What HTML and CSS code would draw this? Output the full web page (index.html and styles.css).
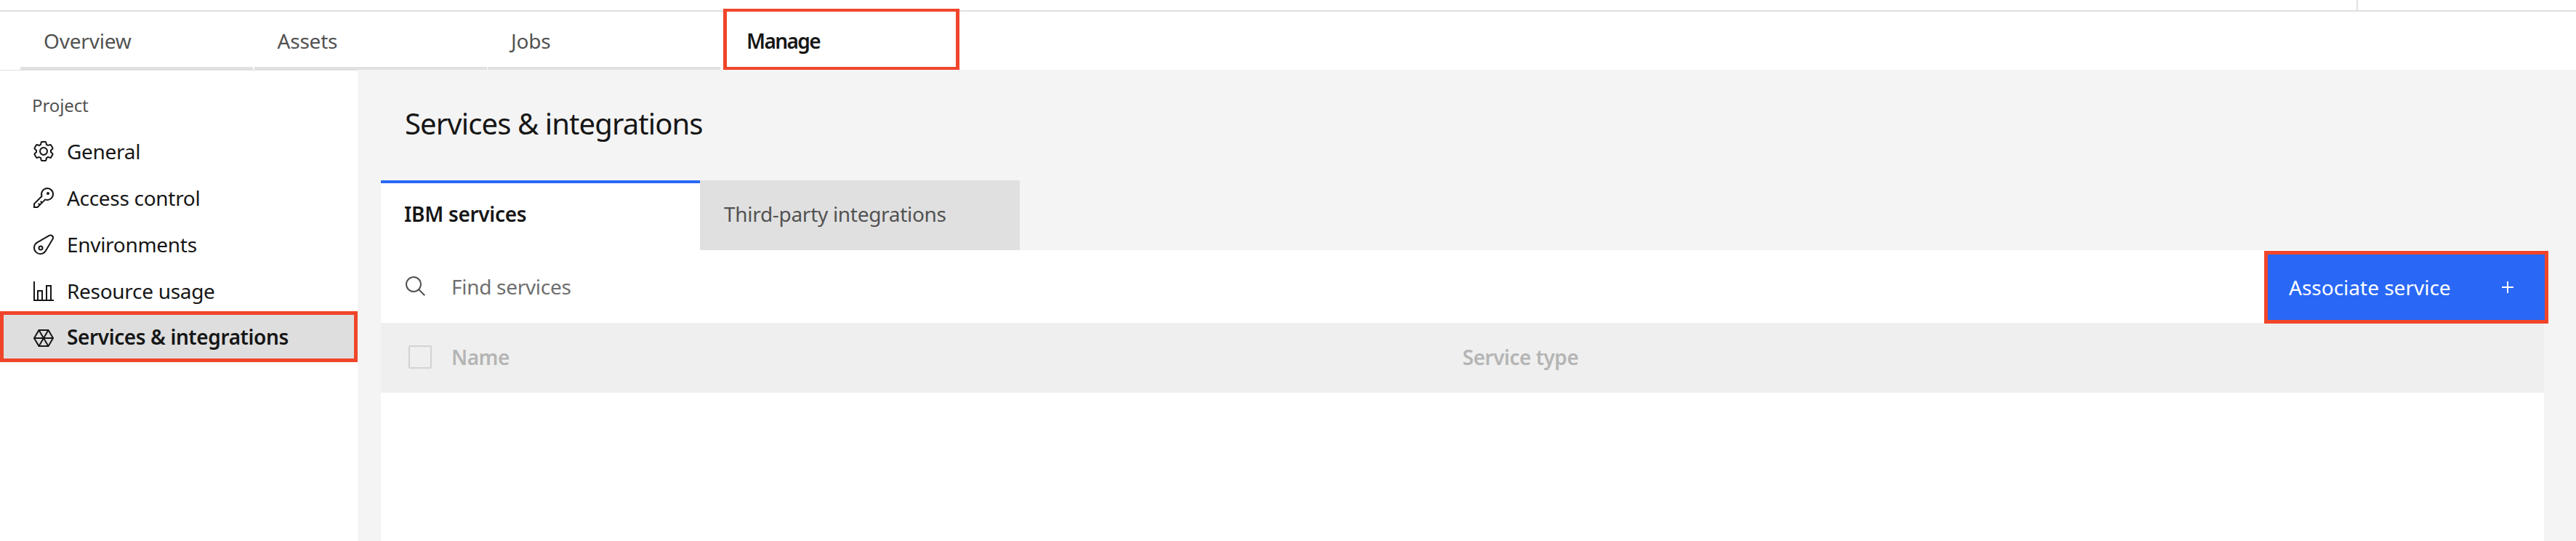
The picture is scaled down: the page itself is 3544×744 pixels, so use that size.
FILE: index.html
```html
<!DOCTYPE html>
<html lang="en">
<head>
  <meta charset="UTF-8" />
  <meta name="viewport" content="width=device-width, initial-scale=1.0" />
  <title>Services &amp; integrations</title>
  <link rel="stylesheet" href="styles.css">
</head>
<body>
  <div class="topbar"><span class="topbar-divider"></span></div>

  <nav class="tabs">
    <a class="tab">Overview</a>
    <a class="tab">Assets</a>
    <a class="tab">Jobs</a>
    <a class="tab tab-active">Manage</a>
  </nav>

  <div class="page">
    <aside class="sidebar">
      <div class="side-label">Project</div>
      <a class="side-item">
        <svg class="icon" viewBox="0 0 32 32"><path d="M27,16.76c0-.25,0-.5,0-.76s0-.51,0-.77l1.92-1.68A2,2,0,0,0,29.3,11L26.94,7a2,2,0,0,0-1.73-1,2,2,0,0,0-.64.1l-2.43.82a11.35,11.35,0,0,0-1.31-.75l-.51-2.52a2,2,0,0,0-2-1.61H13.64a2,2,0,0,0-2,1.61l-.51,2.52a11.48,11.48,0,0,0-1.32.75L7.43,6.06A2,2,0,0,0,6.79,6,2,2,0,0,0,5.06,7L2.7,11a2,2,0,0,0,.41,2.51L5,15.24c0,.25,0,.5,0,.76s0,.51,0,.77L3.11,18.45A2,2,0,0,0,2.7,21L5.06,25a2,2,0,0,0,1.73,1,2,2,0,0,0,.64-.1l2.43-.82a11.35,11.35,0,0,0,1.31.75l.51,2.52a2,2,0,0,0,2,1.61h4.72a2,2,0,0,0,2-1.61l.51-2.52a11.48,11.48,0,0,0,1.32-.75l2.42.82a2,2,0,0,0,.64.1,2,2,0,0,0,1.73-1L29.3,21a2,2,0,0,0-.41-2.51ZM25.21,24l-3.43-1.16a8.86,8.86,0,0,1-2.71,1.57L18.36,28H13.64l-.71-3.55a9.36,9.36,0,0,1-2.7-1.57L6.79,24,4.43,20l2.72-2.4a8.9,8.9,0,0,1,0-3.13L4.43,12,6.79,8l3.43,1.16a8.86,8.86,0,0,1,2.71-1.57L13.64,4h4.72l.71,3.55a9.36,9.36,0,0,1,2.7,1.57L25.21,8l2.36,4-2.72,2.4a8.9,8.9,0,0,1,0,3.13L27.57,20Z"/><path d="M16,22a6,6,0,1,1,6-6A5.94,5.94,0,0,1,16,22Zm0-10a3.91,3.91,0,0,0-4,4,3.91,3.91,0,0,0,4,4,3.91,3.91,0,0,0,4-4A3.91,3.91,0,0,0,16,12Z"/></svg>
        General
      </a>
      <a class="side-item">
        <svg class="icon" viewBox="0 0 32 32"><path d="M21,2a8.9977,8.9977,0,0,0-8.6119,11.6118L2,24v6H8L18.3881,19.6118A9,9,0,1,0,21,2Zm0,16a7.0125,7.0125,0,0,1-2.0322-.3022L17.821,17.35l-.8472.8472-3.1811,3.1812L12.4141,20,11,21.4141l1.3787,1.3786-1.5859,1.5859L9.4141,23,8,24.4141l1.3787,1.3786L7.1716,28H4V24.8284l9.8023-9.8023.8472-.8474-.3473-1.1467A7,7,0,1,1,21,18Z"/><circle cx="22" cy="10" r="2"/></svg>
        Access control
      </a>
      <a class="side-item">
        <svg class="icon icon-line" viewBox="0 0 32 32"><path d="M7.3 13.3L23.77 3.95A3.5 3.5 0 0 1 28.5 8.79L18.8 25.05A8.5 8.5 0 1 1 7.3 13.3Z"/><circle cx="12" cy="21" r="2.5"/></svg>
        Environments
      </a>
      <a class="side-item">
        <svg class="icon" viewBox="0 0 32 32"><path d="M2 3h2v25h26v2H2z"/><path d="M7 15h8v14h-2V17H9v12H7z"/><path d="M19 8h8v21h-2V10h-4v19h-2z"/></svg>
        Resource usage
      </a>
      <a class="side-item side-active">
        <svg class="icon icon-line" viewBox="0 0 32 32"><path d="M3 18L9.5 7H22.5L29 18L22.5 29H9.5Z"/><path d="M3 18H29M9.5 7L22.5 29M22.5 7L9.5 29"/></svg>
        Services &amp; integrations
      </a>
    </aside>

    <main class="content">
      <h1 class="title">Services &amp; integrations</h1>
      <div class="subtabs">
        <a class="subtab subtab-active">IBM services</a>
        <a class="subtab">Third-party integrations</a>
      </div>
      <section class="panel">
        <div class="toolbar">
          <svg class="icon search-icon" viewBox="0 0 32 32"><path d="M29,27.5859l-7.5521-7.5521a11.0177,11.0177,0,1,0-1.4141,1.4141L27.5859,29ZM4,13a9,9,0,1,1,9,9A9.01,9.01,0,0,1,4,13Z"/></svg>
          <span class="search-text">Find services</span>
          <button class="primary">
            Associate service
            <svg class="icon plus-icon" viewBox="0 0 32 32"><path d="M17 15V8h-2v7H8v2h7v7h2v-7h7v-2h-7z"/></svg>
          </button>
        </div>
        <div class="table-head">
          <span class="checkbox"></span>
          <span class="col-name">Name</span>
          <span>Service type</span>
        </div>
      </section>
    </main>
  </div>
</body>
</html>
```

FILE: styles.css
```css
* { box-sizing: border-box; }
html, body { margin: 0; height: 744px; overflow: hidden; }
body { font-family: "Noto Sans", Roboto, sans-serif; font-size: 28px; color: #161616; background: #fff; }

.topbar { height: 16px; border-bottom: 2px solid #e0e0e0; display: flex; justify-content: flex-end; padding-right: 300px; }
.topbar-divider { width: 2px; height: 14px; background: #e0e0e0; }

.tabs { display: flex; height: 80px; padding-left: 28px; }
.tab { width: 320px; margin-right: 1.5px; padding: 24px 0 0 32px; border-bottom: 4px solid #e0e0e0; color: #525252; line-height: 32px; letter-spacing: -0.2px; }
.tab-active { width: 325px; height: 84px; margin: -4px 0 0 2.5px; padding: 24px 0 0 27px; border: 4px solid #f0452a; border-left-width: 5px; border-right-width: 5px; color: #161616; font-weight: 600; letter-spacing: -1.6px; }

.page { display: flex; height: 648px; }

.sidebar { width: 492px; border-top: 1px solid #e0e0e0; padding-top: 33px; }
.side-label { font-size: 24px; line-height: 30px; margin: 0 0 16px 44px; color: #525252; letter-spacing: -0.1px; }
.side-item { display: flex; align-items: center; gap: 16px; height: 64px; padding-left: 44px; letter-spacing: -0.3px; }
.side-active { height: 70px; margin-top: -4px; padding-left: 39px; border: 5px solid #f0452a; background: #dedede; font-weight: 600; letter-spacing: -0.4px; }

.icon { width: 32px; height: 32px; flex: none; fill: #161616; }
.icon-line { fill: none; stroke: #161616; stroke-width: 2; }

.content { flex: 1; background: #f4f4f4; padding: 50px 44px 0 32px; }
.title { margin: 0 0 54px 33px; font-size: 40px; font-weight: 400; line-height: 48px; letter-spacing: -0.9px; }

.subtabs { display: flex; }
.subtab { width: 440px; height: 96px; padding: 30px 0 0 33px; background: #e0e0e0; color: #525252; line-height: 32px; letter-spacing: -0.3px; }
.subtab-active { width: 439px; padding: 26px 0 0 32px; border-top: 4px solid #2968f6; background: #fff; color: #161616; font-weight: 600; letter-spacing: -0.3px; }

.panel { background: #fff; height: 400px; }
.toolbar { display: flex; align-items: center; height: 100px; padding-left: 32px; }
.search-icon { fill: #525252; }
.search-text { margin-left: 33px; color: #6f6f6f; letter-spacing: -0.3px; }

.primary { position: relative; align-self: flex-start; margin: 1px -6px 0 auto; width: 391px; height: 100px; display: flex; align-items: center; justify-content: space-between; padding: 0 35px 0 29px; border: 5px solid #f0452a; background: #2968f6; color: #fff; font: inherit; letter-spacing: 0; }
.plus-icon { fill: #fff; }

.table-head { display: flex; align-items: center; height: 96px; padding: 0 0 3px 38px; background: #efefef; color: #b5b5b5; font-weight: 600; letter-spacing: -0.5px; }
.checkbox { width: 32px; height: 32px; margin-right: 27px; border: 2px solid #d2d2d2; border-radius: 2px; }
.col-name { width: 1391px; }
```
